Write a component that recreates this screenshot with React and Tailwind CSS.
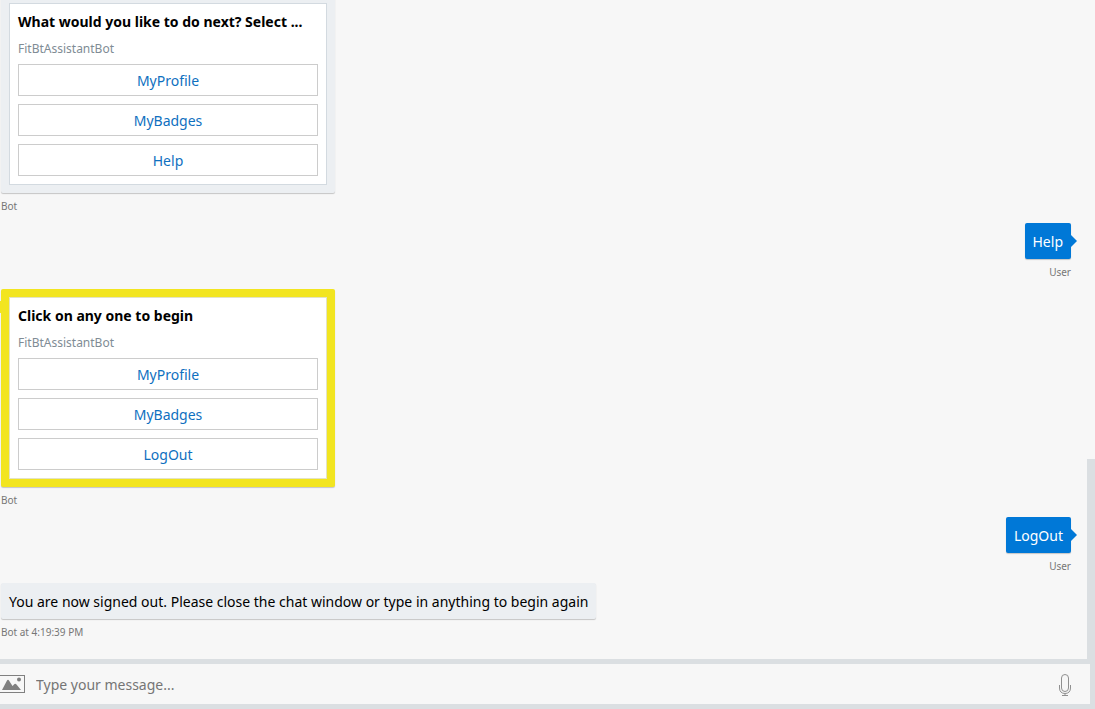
import React, { useState } from "react";

const messages = [
  {
    from: "bot",
    caption: "Bot",
    card: {
      title: "What would you like to do next? Select ...",
      options: ["MyProfile", "MyBadges", "Help"],
    },
  },
  { from: "user", caption: "User", text: "Help" },
  {
    from: "bot",
    caption: "Bot",
    highlighted: true,
    card: {
      title: "Click on any one to begin",
      options: ["MyProfile", "MyBadges", "LogOut"],
    },
  },
  { from: "user", caption: "User", text: "LogOut" },
  {
    from: "bot",
    caption: "Bot at 4:19:39 PM",
    text: "You are now signed out. Please close the chat window or type in anything to begin again",
  },
];

const HeroCard = ({ title, options, highlighted }) => (
  <div
    className={`relative w-[334px] p-2 rounded-xs shadow-[0_1px_1px_rgba(0,0,0,0.2)] ${
      highlighted ? "bg-[#f2e520]" : "bg-[#eceff2]"
    }`}
  >
    {highlighted && (
      <span className="absolute top-3 -left-1 w-1 h-3 bg-[#f2e520]" />
    )}
    <div
      className={`p-2 bg-white border ${
        highlighted ? "border-[#e3e3c4]" : "border-[#d3dae0]"
      }`}
    >
      <h2 className="whitespace-nowrap text-[14px] leading-5 font-bold text-black">
        {title}
      </h2>
      <p className="pt-[9px] pb-[7px] text-[12px] leading-4 text-[#808c95]">
        FitBtAssistantBot
      </p>
      <div className="flex flex-col gap-2">
        {options.map((option) => (
          <button
            key={option}
            type="button"
            className="h-8 w-full pt-0.5 border border-[#cccccc] bg-white text-[14px] leading-5 text-[#0f70c0] cursor-pointer hover:bg-gray-50"
          >
            {option}
          </button>
        ))}
      </div>
    </div>
  </div>
);

const Bubble = ({ text, isUser }) => (
  <div
    className={`relative px-2 pt-[9px] pb-[7px] rounded-xs text-[14px] leading-5 shadow-[0_1px_1px_rgba(0,0,0,0.2)] ${
      isUser ? "bg-[#0078d7] text-white" : "bg-[#eceff2] text-black"
    }`}
  >
    {text}
    {isUser && (
      <svg
        className="absolute left-full top-3 w-1.5 h-3"
        viewBox="0 0 6 12"
        fill="#0078d7"
      >
        <path d="M0 0 L6 6 L0 12 Z" />
      </svg>
    )}
  </div>
);

const Message = ({ message }) => {
  const isUser = message.from === "user";

  return (
    <li
      className={`flex flex-col shrink-0 pb-2 ${
        isUser ? "items-end" : "items-start"
      }`}
    >
      {message.card ? (
        <HeroCard {...message.card} highlighted={message.highlighted} />
      ) : (
        <Bubble text={message.text} isUser={isUser} />
      )}
      <span className="mt-1 text-[10px] leading-[18px] text-[#767676]">
        {message.caption}
      </span>
    </li>
  );
};

const ImageIcon = () => (
  <svg className="w-[25px] h-[18px]" viewBox="0 0 25 18" fill="none">
    <rect x="-0.5" y="0.5" width="25" height="17" stroke="#808080" />
    <path
      d="M2 15 L7 5.500 Q8 4 9 5.500 L12.500 11 L14.500 9 Q15.500 8.300 16.500 9.500 L21 15 Z"
      fill="#808080"
    />
    <circle cx="19" cy="4.500" r="2" fill="#808080" />
  </svg>
);

const MicIcon = () => (
  <svg
    className="w-3 h-[22px]"
    viewBox="0 0 12 22"
    fill="none"
    stroke="#909090"
  >
    <rect x="2.500" y="0.500" width="7" height="17" rx="3.500" />
    <path d="M0.500 11 V14 C0.500 17.500 2.500 19.500 6 19.500 C9.500 19.500 11.500 17.500 11.500 14 V11" />
    <path d="M6 19.500 V21.500 M3 21.500 H9" />
  </svg>
);

const App = () => {
  const [text, setText] = useState("");

  return (
    <div className="h-screen flex flex-col bg-[#dbdfe2] font-['Noto_Sans','Open_Sans',sans-serif]">
      <main className="flex-1 min-h-0 flex bg-[#f7f7f7]">
        <ul className="flex-1 min-w-0 flex flex-col justify-end overflow-hidden pl-px pr-4 pb-2.5">
          {messages.map((message, i) => (
            <Message key={i} message={message} />
          ))}
        </ul>
        <div className="w-2 h-[200px] self-end bg-[#dbdfe2]" />
      </main>

      <form
        className="flex items-center h-10 mt-[5px] mb-[5px] mr-[5px] bg-[#f7f7f7]"
        onSubmit={(e) => e.preventDefault()}
      >
        <button type="button" aria-label="Upload image">
          <ImageIcon />
        </button>
        <input
          type="text"
          aria-label="Type your message"
          value={text}
          onChange={(e) => setText(e.target.value)}
          placeholder="Type your message..."
          className="flex-1 min-w-0 h-full px-[11px] text-[14px] leading-5 outline-none placeholder:text-[#757575]"
        />
        <button type="button" aria-label="Speak" className="pt-0.5 pl-2 pr-[19px]">
          <MicIcon />
        </button>
      </form>
    </div>
  );
};

export default App;
